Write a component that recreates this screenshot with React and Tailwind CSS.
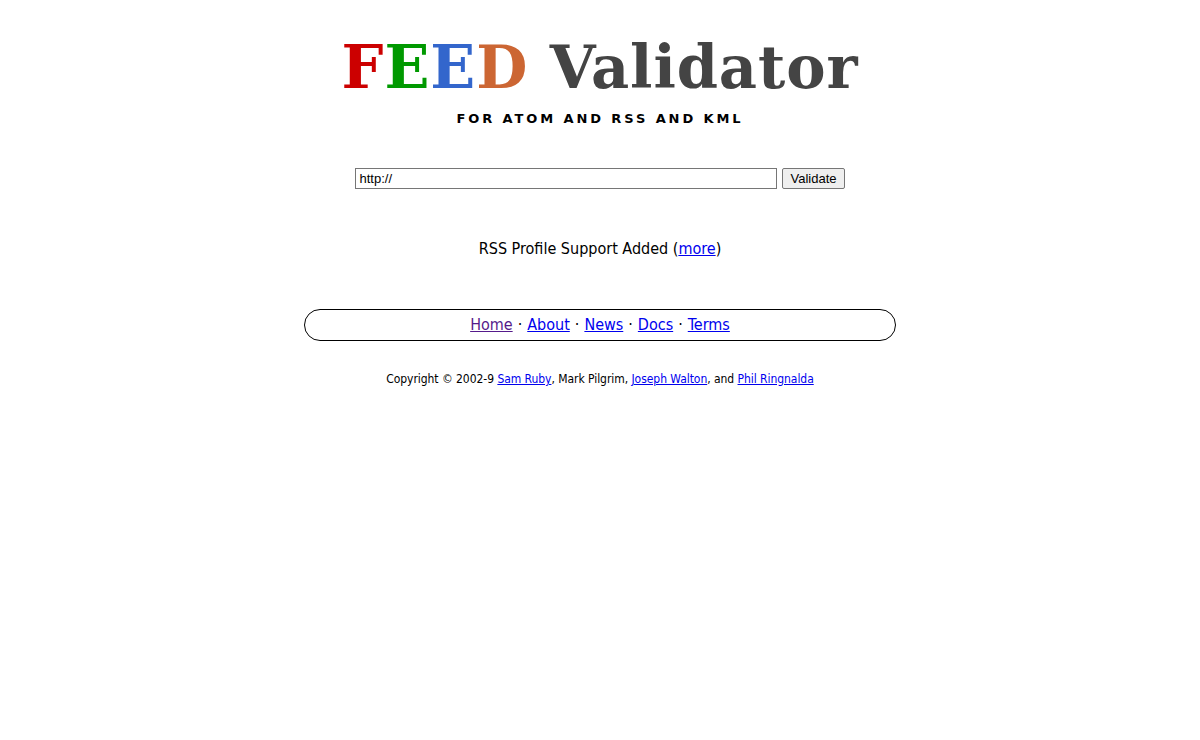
export default function App() {
  return (
    <div className="min-h-screen bg-white text-black" style={{ fontFamily: '"DejaVu Sans Condensed", "DejaVu Sans", sans-serif' }}>
      <div className="mx-auto w-[592px] pt-[38px] text-center">
        <h1 className="font-bold leading-none text-[59px] tracking-[0.9px]" style={{ fontFamily: '"DejaVu Serif", "Liberation Serif", serif' }}>
          <span className="text-[#cc0000]">F</span>
          <span className="text-[#009900]">E</span>
          <span className="text-[#3366cc]">E</span>
          <span className="text-[#cc6633]">D</span>{' '}
          <span className="text-[#444444]">Validator</span>
        </h1>
        <p className="mt-[15px] text-[13px] font-bold tracking-[2.9px] leading-none" style={{ fontFamily: '"DejaVu Sans", sans-serif' }}>
          FOR ATOM AND RSS AND KML
        </p>

        <form className="mt-[43px] flex items-center justify-center gap-[5px]" onSubmit={(e) => e.preventDefault()}>
          <input
            defaultValue="http://"
            className="w-[422px] h-[21px] border border-[#767676] px-[3px] text-[13px] text-black"
            style={{ fontFamily: '"Liberation Sans", Arial, sans-serif' }}
          />
          <button
            type="submit"
            className="h-[21px] px-[7px] border border-[#767676] rounded-[2px] bg-[#efefef] text-[13px]"
            style={{ fontFamily: '"Liberation Sans", Arial, sans-serif' }}
          >
            Validate
          </button>
        </form>

        <p className="mt-[48px] text-[16px]">
          RSS Profile Support Added (<a href="#" className="text-[#0000ee] underline">more</a>)
        </p>

        <div className="mt-[48px] h-[32px] rounded-full border border-black flex items-center justify-center text-[16px]">
          <a href="#" className="text-[#551a8b] underline">Home</a>
          <span className="mx-[5px]">·</span>
          <a href="#" className="text-[#0000ee] underline">About</a>
          <span className="mx-[5px]">·</span>
          <a href="#" className="text-[#0000ee] underline">News</a>
          <span className="mx-[5px]">·</span>
          <a href="#" className="text-[#0000ee] underline">Docs</a>
          <span className="mx-[5px]">·</span>
          <a href="#" className="text-[#0000ee] underline">Terms</a>
        </div>

        <p className="mt-[29px] text-[12px] tracking-[-0.05px]">
          Copyright © 2002-9 <a href="#" className="text-[#0000ee] underline">Sam Ruby</a>, Mark Pilgrim,{' '}
          <a href="#" className="text-[#0000ee] underline">Joseph Walton</a>, and{' '}
          <a href="#" className="text-[#0000ee] underline">Phil Ringnalda</a>
        </p>
      </div>
    </div>
  );
}
